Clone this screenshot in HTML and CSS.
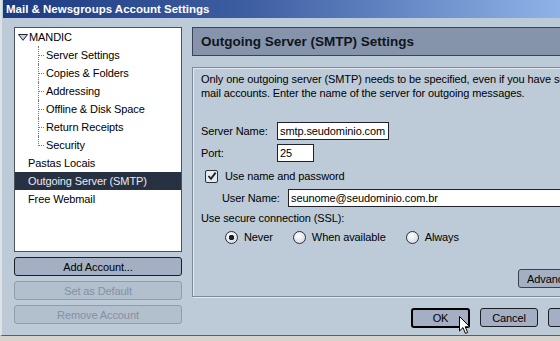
FILE: index.html
```html
<!DOCTYPE html>
<html lang="en">
<head>
    <meta charset="UTF-8">
    <title>Mail &amp; Newsgroups Account Settings</title>
    <link rel="stylesheet" href="styles.css">
</head>
<body>
    <div class="dialog">
        <div class="titlebar">Mail &amp; Newsgroups Account Settings</div>

        <div class="main">
            <!-- Account tree + account buttons -->
            <div class="left">
                <div class="tree">
                    <div class="row top">
                        <svg class="twisty" width="10" height="7" viewBox="0 0 10 7">
                            <path d="M0.5 0.5 H9.5 L5 6.3 Z" fill="#c8d2dc" stroke="#1e2430" stroke-width="1"/>
                        </svg>MANDIC
                    </div>
                    <div class="row child">Server Settings</div>
                    <div class="row child">Copies &amp; Folders</div>
                    <div class="row child">Addressing</div>
                    <div class="row child">Offline &amp; Disk Space</div>
                    <div class="row child">Return Receipts</div>
                    <div class="row child last">Security</div>
                    <div class="row top">Pastas Locais</div>
                    <div class="row top selected">Outgoing Server (SMTP)</div>
                    <div class="row top">Free Webmail</div>
                </div>
                <button class="btn wide">Add Account...</button>
                <button class="btn wide" disabled>Set as Default</button>
                <button class="btn wide" disabled>Remove Account</button>
            </div>

            <!-- Settings panel -->
            <div class="right">
                <div class="panel-header">Outgoing Server (SMTP) Settings</div>
                <div class="panel">
                    <p class="intro">Only one outgoing server (SMTP) needs to be specified, even if you have several<br>mail accounts. Enter the name of the server for outgoing messages.</p>

                    <div class="field first">
                        <span class="label">Server Name:</span>
                        <span class="input server">smtp.seudominio.com</span>
                    </div>
                    <div class="field port-row">
                        <span class="label">Port:</span>
                        <span class="input port">25</span>
                    </div>
                    <div class="check-row">
                        <span class="checkbox">
                            <svg width="10" height="10" viewBox="0 0 10 10">
                                <path d="M1.5 5 L4 7.8 L8.6 1.6" fill="none" stroke="#1a1f28" stroke-width="1.8"/>
                            </svg>
                        </span>
                        Use name and password
                    </div>
                    <div class="field user-row">
                        <span class="label">User Name:</span>
                        <span class="input user">seunome@seudominio.com.br</span>
                    </div>
                    <div class="ssl-label">Use secure connection (SSL):</div>
                    <div class="radios">
                        <span class="radio-item"><span class="radio on"></span>Never</span>
                        <span class="radio-item"><span class="radio"></span>When available</span>
                        <span class="radio-item"><span class="radio"></span>Always</span>
                    </div>
                    <div class="advanced-row">
                        <button class="btn advanced">Advanced...</button>
                    </div>
                </div>

                <div class="footer">
                    <button class="btn default">OK</button>
                    <button class="btn">Cancel</button>
                    <button class="btn">Help</button>
                </div>
            </div>
        </div>

        <!-- mouse pointer over OK -->
        <svg class="cursor" width="12" height="19" viewBox="0 0 12 19">
            <path d="M0.5 0.5 V15 L4 11.6 L6.4 17.4 L8.6 16.4 L6.2 10.8 H10.8 Z" fill="#fff" stroke="#000" stroke-width="1"/>
        </svg>
    </div>
</body>
</html>
```

FILE: styles.css
```css
* {
    margin: 0;
    padding: 0;
    box-sizing: border-box;
}
body {
    font-family: 'Liberation Sans', Arial, sans-serif;
    font-size: 11px;
    letter-spacing: -0.1px;
    color: #000;
    background-color: #d6d3cc;
    width: 560px;
    height: 341px;
    overflow: hidden;
}
.dialog {
    position: relative;
    width: 560px;
    height: 336px;
    overflow: hidden;
    background-color: #bccbd7;
    border-left: 2px solid #dde2e6;
    border-bottom: 1px solid #5b6068;
}
.titlebar {
    height: 18px;
    margin-left: 1px;
    padding-left: 3px;
    line-height: 18px;
    font-size: 11.5px;
    font-weight: bold;
    letter-spacing: 0;
    color: #fff;
    background: linear-gradient(to right, #1c3a80, #3f5fa3 45%, #8fb3e8);
}
.main {
    display: flex;
    padding: 9px 0 0 12px;
}
.left {
    width: 168px;
    flex-shrink: 0;
    display: flex;
    flex-direction: column;
}
.tree {
    height: 225px;
    background-color: #fff;
    border: 1px solid #4c525c;
    margin-bottom: 5px;
}
.row {
    height: 18px;
    display: flex;
    align-items: center;
    white-space: nowrap;
}
.row.top {
    padding-left: 13px;
}
.row.top:first-child {
    padding-left: 3px;
}
.twisty {
    margin-right: 1px;
}
.row.child {
    padding-left: 23px;
}
.row.child::before {
    content: "";
    width: 7px;
    height: 18px;
    align-self: flex-start;
    border-left: 1px dotted #7a7a7a;
    background: repeating-linear-gradient(to right, #7a7a7a 0 1px, transparent 1px 2px) no-repeat 0 9px / 6px 1px;
}
.row.child.last::before {
    height: 10px;
}
.row.selected {
    background-color: #283142;
    color: #e8ebef;
}
.btn {
    font-family: inherit;
    font-size: 11px;
    letter-spacing: -0.1px;
    color: #000;
    height: 19px;
    background-color: #a4afc3;
    border: 1px solid #1b1e24;
    border-radius: 3px;
    cursor: default;
}
.btn.wide {
    width: 168px;
    margin-bottom: 5px;
}
.btn:disabled {
    color: #8491a1;
    background-color: #b2bfcd;
    border-color: #8f9cab;
}
.right {
    width: 400px;
    flex-shrink: 0;
    margin-left: 10px;
}
.panel-header {
    height: 29px;
    line-height: 27px;
    padding-left: 8px;
    font-size: 13.5px;
    font-weight: bold;
    letter-spacing: 0;
    color: #10141c;
    background-color: #8594ab;
    border: 1px solid #3b4454;
    white-space: nowrap;
}
.panel {
    margin-top: 11px;
    height: 230px;
    padding: 4px 0 0 8px;
    border: 1px solid #7f8a98;
    box-shadow: inset 1px 1px 0 #e3e9ee, 1px 1px 0 #e3e9ee;
}
.intro {
    line-height: 14px;
    white-space: nowrap;
}
.field {
    display: flex;
    align-items: center;
    margin-top: 4px;
}
.field.first {
    margin-top: 22px;
}
.label {
    width: 76px;
}
.input {
    height: 18px;
    line-height: 16px;
    padding-left: 2px;
    background-color: #fff;
    border: 1px solid #20242a;
    overflow: hidden;
    white-space: nowrap;
}
.input.server {
    width: 112px;
}
.input.port {
    width: 37px;
}
.user-row {
    padding-left: 21px;
}
.user-row .label {
    width: 66px;
}
.input.user {
    width: 290px;
}
.check-row {
    display: flex;
    align-items: center;
    height: 18px;
    margin-top: 5px;
    padding-left: 4px;
}
.checkbox {
    width: 13px;
    height: 13px;
    margin-right: 7px;
    display: flex;
    align-items: center;
    justify-content: center;
    background-color: #e4eaf0;
    border: 1px solid #2a2f38;
    border-radius: 2px;
}
.ssl-label {
    line-height: 14px;
    margin-top: 4px;
}
.radios {
    display: flex;
    height: 18px;
    align-items: center;
    margin-top: 3px;
    padding-left: 24px;
}
.radio-item {
    display: flex;
    align-items: center;
    margin-right: 20px;
}
.radio {
    width: 13px;
    height: 13px;
    margin-right: 6px;
    border-radius: 50%;
    border: 1px solid #2b3038;
    background: radial-gradient(circle at 40% 35%, #ffffff, #d3dbe4 80%);
}
.radio.on {
    background: radial-gradient(circle, #1a1e26 0 2.5px, transparent 3px), radial-gradient(circle at 40% 35%, #ffffff, #d3dbe4 80%);
}
.advanced-row {
    margin-top: 23px;
    padding-left: 317px;
}
.btn.advanced {
    width: 80px;
    text-align: left;
    padding-left: 8px;
    border-color: #3a3f48;
}
.footer {
    display: flex;
    gap: 10px;
    margin-top: 11px;
    padding-left: 219px;
}
.footer .btn {
    width: 58px;
    flex-shrink: 0;
}
.btn.default {
    width: 59px;
    height: 20px;
    border-width: 2px;
    border-color: #000;
}
.cursor {
    position: absolute;
    left: 457px;
    top: 316px;
}
```
